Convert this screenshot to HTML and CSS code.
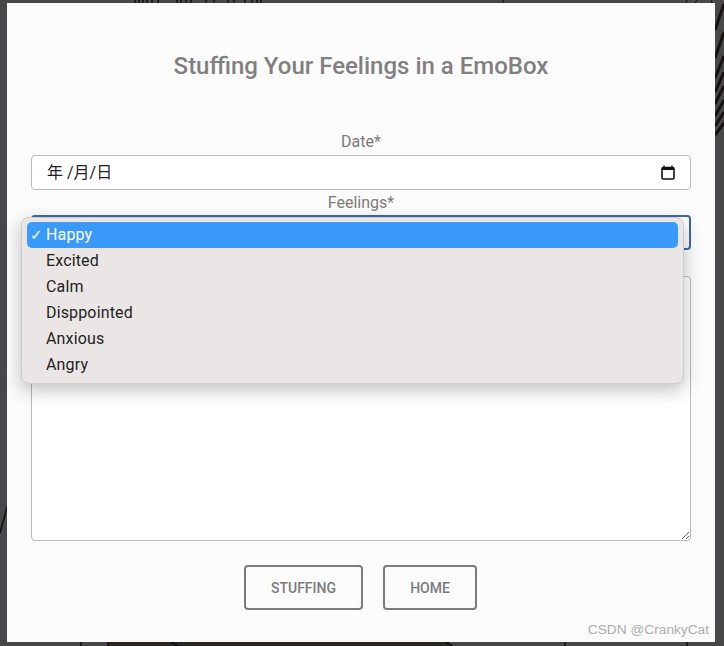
FILE: index.html
```html
<!DOCTYPE html>
<html lang="en">
<head>
  <meta charset="UTF-8" />
  <meta name="viewport" content="width=device-width, initial-scale=1.0"/>
  <title>EmoBox</title>
  <link rel="stylesheet" href="styles.css">
</head>
<body>
  <!-- bits of the dark line drawing behind the modal -->
  <svg class="backdrop" width="724" height="646" viewBox="0 0 724 646">
    <g stroke="#111" fill="none">
      <path d="M135 0v3M139 0v3M143 0v3M147 0v3M152 0v3M158 0v3M177 0v3M181 0v3M186 0v3M191 0v3M206 0v3M214 0v3M228 0v3M234 0v3M245 0v3M252 0v3M257 0v3M261 0v3" stroke-width="1.5"/>
      <path d="M503 0v3M687 0l-1 3M697 0l-2 3M712 0l-1 3" stroke-width="1"/>
      <path d="M715 30l9 -26M715 58l9 -26M715 78l9 -22M715 92l9 -20M715 104l9 -18M715 116l9 -16M715 126l9 -14M715 135l9 -12" stroke="#171210" stroke-width="3"/>
      <path d="M7 507l-7 26" stroke-width="1.5"/>
    </g>
    <rect x="108" y="642" width="342" height="4" fill="#2b2620"/>
    <path d="M81 642v4M108 642v4M170 642l8 4M445 642l8 4M565 642v4M687 642v4" stroke="#111" stroke-width="1.5" fill="none"/>
  </svg>

  <div class="modal">
    <h1 class="title">Stuffing Your Feelings in a EmoBox</h1>

    <div class="form">
      <label class="field-label">Date*</label>
      <div class="date-input">
        <span class="date-text">年 /月/日</span>
        <svg class="calendar" width="14" height="15" viewBox="0 0 14 15">
          <path d="M3 .5v2.5M11 .5v2.5" stroke="#111" stroke-width="1.4" fill="none"/>
          <rect x="1" y="2.5" width="12" height="11.5" rx="1.2" fill="#fff" stroke="#111" stroke-width="1.6"/>
          <rect x="1" y="2" width="12" height="3" fill="#111"/>
        </svg>
      </div>

      <label class="field-label feelings-label">Feelings*</label>
      <div class="select-wrap">
        <div class="select-box"></div>
        <ul class="dropdown">
          <li class="option selected"><span class="check">✓</span>Happy</li>
          <li class="option">Excited</li>
          <li class="option">Calm</li>
          <li class="option">Disppointed</li>
          <li class="option">Anxious</li>
          <li class="option">Angry</li>
        </ul>
      </div>

      <textarea class="notes"></textarea>

      <div class="buttons">
        <button class="btn btn-stuffing">STUFFING</button>
        <button class="btn btn-home">HOME</button>
      </div>
    </div>

    <div class="watermark">CSDN @CrankyCat</div>
  </div>
</body>
</html>
```

FILE: styles.css
```css
html, body {
  margin: 0;
  height: 646px;
  overflow: hidden;
}
body {
  position: relative;
  background-color: #48484a;
  font-family: Roboto, "Noto Sans CJK SC", sans-serif;
  padding: 3px 9px 4px 7px;
  box-sizing: border-box;
}
.backdrop {
  position: absolute;
  top: 0;
  left: 0;
}
.modal {
  position: relative;
  height: 639px;
  padding: 0 24px;
  background-color: #fbfbfb;
  box-sizing: border-box;
}
.title {
  margin: 0;
  padding-top: 49px;
  height: 129px;
  box-sizing: border-box;
  font-size: 24px;
  font-weight: 500;
  line-height: 28px;
  color: #808080;
  text-align: center;
}
.form {
  display: flex;
  flex-direction: column;
}
.field-label {
  display: block;
  height: 23px;
  font-size: 16px;
  line-height: 20px;
  color: #7b7b7b;
  text-align: center;
}
.feelings-label {
  height: 25px;
  padding-top: 4px;
  box-sizing: border-box;
  line-height: 18px;
}
.date-input {
  display: flex;
  align-items: center;
  justify-content: space-between;
  height: 35px;
  padding: 0 15px 0 15px;
  background-color: #fff;
  border: 1px solid #b9b9b9;
  border-radius: 4px;
  box-sizing: border-box;
}
.date-text {
  margin-top: -3px;
  font-size: 16px;
  color: #222;
}
.calendar {
  display: block;
}
.select-wrap {
  position: relative;
  height: 35px;
}
.select-box {
  height: 35px;
  background-color: #fff;
  border: 2px solid #3a6ba8;
  border-radius: 4px;
  box-sizing: border-box;
}
.dropdown {
  position: absolute;
  top: 2px;
  left: -10px;
  width: 663px;
  height: 167px;
  margin: 0;
  padding: 4px 5px 0 5px;
  list-style: none;
  background-color: #e9e6e5;
  border: 1px solid #cfcccb;
  border-radius: 8px;
  box-shadow: 0 6px 18px rgba(0, 0, 0, 0.25);
  box-sizing: border-box;
}
.option {
  position: relative;
  height: 26px;
  padding-left: 19px;
  font-size: 16px;
  letter-spacing: 0.15px;
  line-height: 26px;
  color: #1f1f1f;
}
.option.selected {
  background-color: #3a9afc;
  border-radius: 5px;
  color: #fff;
}
.check {
  position: absolute;
  left: 3px;
  font-size: 15px;
  font-family: "DejaVu Sans", sans-serif;
}
.notes {
  display: block;
  width: 100%;
  height: 265px;
  margin: 26px 0 0;
  background-color: #fff;
  border: 1px solid #b9b9b9;
  border-radius: 4px;
  box-sizing: border-box;
  resize: vertical;
}
.buttons {
  display: flex;
  justify-content: center;
  gap: 20px;
  margin-top: 24px;
  padding-right: 1px;
}
.btn {
  height: 45px;
  background: transparent;
  border: 2px solid #7b7b7b;
  border-radius: 4px;
  font-family: Roboto, sans-serif;
  font-size: 14px;
  font-weight: 500;
  color: #7b7b7b;
  padding: 0;
  cursor: pointer;
}
.btn-stuffing {
  width: 119px;
}
.btn-home {
  width: 94px;
}
.watermark {
  position: absolute;
  right: 6px;
  bottom: 5px;
  font-family: "Liberation Sans", sans-serif;
  font-size: 13.7px;
  color: #adadad;
}
```
